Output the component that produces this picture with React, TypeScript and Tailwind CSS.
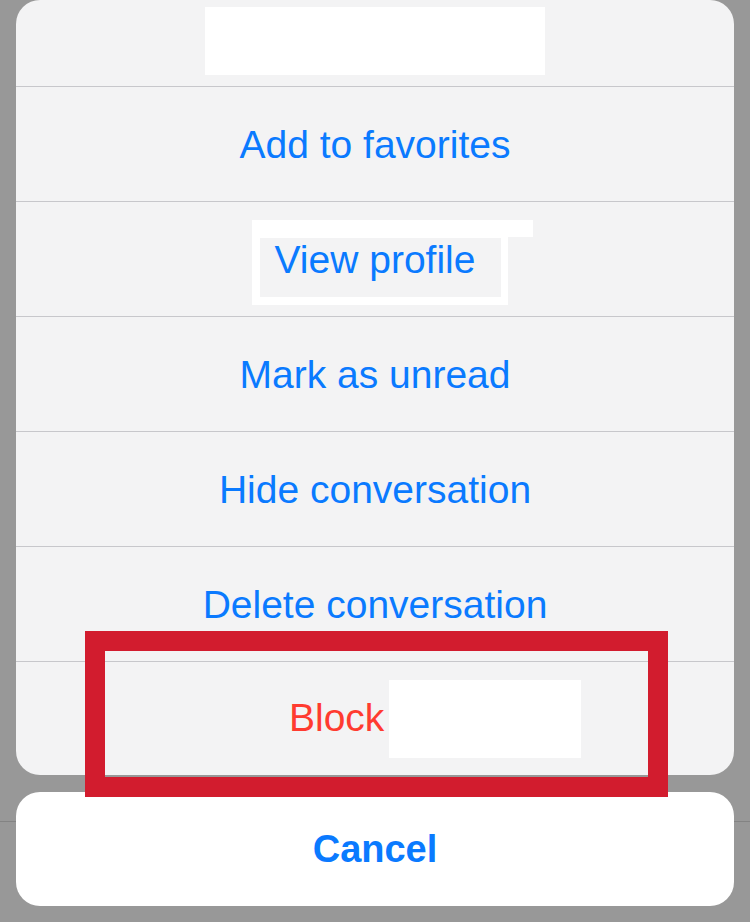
import React from "react";

const font = { fontFamily: '"Liberation Sans", Arial, sans-serif' };

function Row({ children }: { children: React.ReactNode }) {
  return (
    <div className="relative flex h-[115px] items-center justify-center border-t border-[#c7c7cb] pt-[2px]">
      {children}
    </div>
  );
}

export default function App() {
  return (
    <div className="relative h-[922px] w-[750px] overflow-hidden bg-[#989898]" style={font}>
      {/* underlying page (dimmed) */}
      <div className="flex h-full flex-col">
        <div className="flex-1" />
        <div className="grid h-[101px] grid-cols-3 border-t border-[#838383] pt-[66px] text-[21px] leading-[21px]">
          <div className="text-center text-[#24589a]">Chats</div>
          <div className="text-center text-[#5a5a5a]">Calls</div>
          <div className="text-center text-[#5a5a5a]">Contacts</div>
        </div>
      </div>

      {/* action sheet overlay */}
      <div className="absolute inset-0 flex flex-col px-[16px] pb-[16px]">
        <div className="flex flex-col overflow-hidden rounded-[24px] bg-[#f3f3f4] text-[39px] text-[#0a7aff]">
          <div className="flex h-[86px] justify-center pt-[7px]">
            <div className="h-[68px] w-[340px] bg-white" />
          </div>
          <Row>Add to favorites</Row>
          <Row>
            <div className="absolute left-[236px] top-[18px] h-[85px] w-[256px] border-b-[8px] border-l-[8px] border-r-[7px] border-t-[18px] border-white" />
            <div className="absolute left-[492px] top-[18px] h-[17px] w-[25px] bg-white" />
            <span className="relative">View profile</span>
          </Row>
          <Row>Mark as unread</Row>
          <Row>Hide conversation</Row>
          <Row>Delete conversation</Row>
          <div className="flex h-[114px] items-center border-t border-[#c7c7cb] pl-[273px] text-[#ff3b30]">
            <span>Block</span>
            <div className="ml-[5px] h-[78px] w-[192px] bg-white" />
          </div>
        </div>
        <div className="mt-[17px] flex h-[114px] items-center justify-center rounded-[24px] bg-white text-[38px] font-bold text-[#0a7aff]">
          Cancel
        </div>
      </div>

      {/* red annotation frame */}
      <div className="absolute left-[85px] top-[631px] h-[166px] w-[583px] border-[20px] border-[#d21c2e]" />
    </div>
  );
}
